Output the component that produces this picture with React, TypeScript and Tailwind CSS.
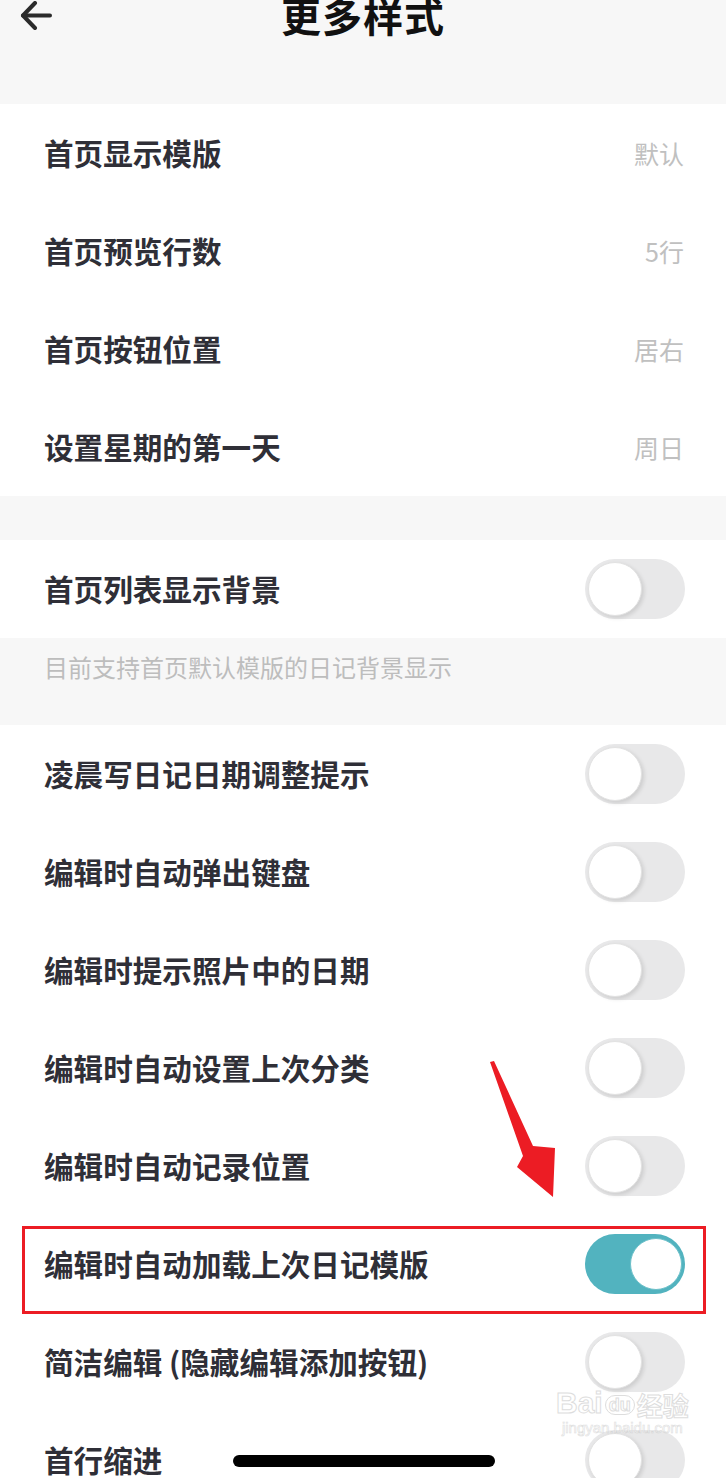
import React from "react";

const font = { fontFamily: '"Noto Sans CJK SC", "Noto Sans", sans-serif' };

function Toggle({ on = false }: { on?: boolean }) {
    if (on) {
        return (
            <div className="flex items-center justify-end w-[100px] h-[60px] rounded-full bg-[#52b3bf] pr-[3px]">
                <div className="w-[52px] h-[52px] rounded-full bg-white border border-[#6cc0c9]" />
            </div>
        );
    }
    return (
        <div className="flex items-center w-[100px] h-[60px] rounded-full bg-[#e8e8e9] pl-[3px]">
            <div className="w-[54px] h-[54px] rounded-full bg-white border border-[#e2e2e2] shadow-[2px_2px_4px_rgba(0,0,0,0.12)]" />
        </div>
    );
}

function Row({ label, value, toggle, on }: { label: string; value?: string; toggle?: boolean; on?: boolean }) {
    return (
        <div className="flex items-center justify-between h-[98px] pl-[44px] pr-[41px] shrink-0">
            <span className="text-[29.6px] font-semibold text-[#2f2f37] leading-none">{label}</span>
            {toggle ? (
                <Toggle on={on} />
            ) : (
                <span className="text-[25px] text-[#c0c0c0] leading-none pr-[1px]">{value}</span>
            )}
        </div>
    );
}

export default function App() {
    return (
        <div className="relative w-[726px] h-[1478px] overflow-hidden bg-[#f7f7f7]" style={font}>
            {/* header */}
            <div className="flex items-start h-[104px] px-[20px]">
                <svg width="32" height="30" viewBox="0 0 32 30" className="mt-[1px]" fill="none" stroke="#2b2b2b" strokeWidth="4" strokeLinecap="round" strokeLinejoin="round">
                    <path d="M3 14.5 H30" />
                    <path d="M15 2 L3 14.5 L15 27" />
                </svg>
                <div className="flex-1 flex justify-center -mt-[6px] -ml-[32px]">
                    <span className="text-[40px] font-bold text-[#111] leading-[42px] tracking-[1px]">更多样式</span>
                </div>
            </div>

            <div className="flex flex-col bg-white">
                <Row label="首页显示模版" value="默认" />
                <Row label="首页预览行数" value="5行" />
                <Row label="首页按钮位置" value="居右" />
                <Row label="设置星期的第一天" value="周日" />
            </div>

            <div className="h-[44px]" />

            <div className="bg-white">
                <Row label="首页列表显示背景" toggle />
            </div>

            <div className="h-[87px] pl-[44px] pt-[12px]">
                <span className="text-[24px] text-[#bdbdbd] leading-[34px]">目前支持首页默认模版的日记背景显示</span>
            </div>

            <div className="flex flex-col bg-white">
                <Row label="凌晨写日记日期调整提示" toggle />
                <Row label="编辑时自动弹出键盘" toggle />
                <Row label="编辑时提示照片中的日期" toggle />
                <Row label="编辑时自动设置上次分类" toggle />
                <Row label="编辑时自动记录位置" toggle />
                <Row label="编辑时自动加载上次日记模版" toggle on />
                <Row label="简洁编辑 (隐藏编辑添加按钮)" toggle />
                <Row label="首行缩进" toggle />
            </div>

            {/* annotation box */}
            <div className="absolute left-[22px] top-[1226px] w-[684px] h-[88px] border-[3px] border-[#ec1c24]" />

            {/* annotation arrow */}
            <svg className="absolute left-[480px] top-[1055px]" width="90" height="150" viewBox="480 1055 90 150">
                <polygon points="490,1062 494,1061 533,1146 555,1148 553,1197 517,1167 523,1156" fill="#ec1c24" />
            </svg>

            {/* watermark */}
            <div className="absolute left-[556px] top-[1388px] flex flex-col items-center opacity-60">
                <div className="flex items-end gap-[2px] text-white leading-none" style={{ WebkitTextStroke: "1px #c8c8c8" }}>
                    <span className="text-[30px] font-bold" style={{ fontFamily: '"Liberation Sans", sans-serif' }}>Bai</span>
                    <span className="text-[18px] font-bold rounded-full border border-[#c8c8c8] px-[3px] mb-[3px]" style={{ fontFamily: '"Liberation Sans", sans-serif' }}>du</span>
                    <span className="text-[26px] font-bold">经验</span>
                </div>
                <span className="text-[15px] text-white leading-[20px]" style={{ fontFamily: '"Liberation Sans", sans-serif', WebkitTextStroke: "0.6px #c8c8c8" }}>jingyan.baidu.com</span>
            </div>

            {/* home indicator */}
            <div className="absolute left-[233px] top-[1455px] w-[262px] h-[12px] rounded-full bg-black" />
        </div>
    );
}
